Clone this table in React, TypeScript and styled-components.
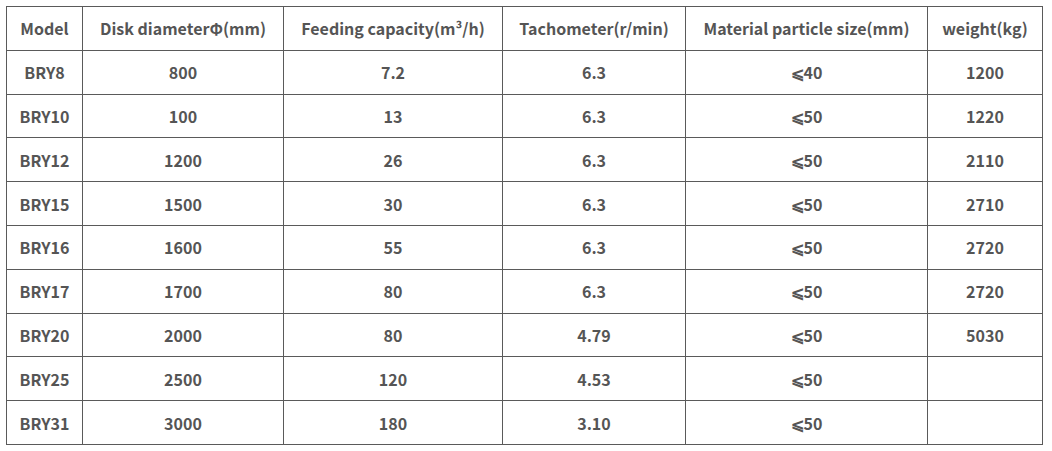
import styled, { createGlobalStyle } from "styled-components";

const GlobalStyle = createGlobalStyle`
  body {
    margin: 0;
    background: #ffffff;
  }
`;

const columns = [
  { title: "Model", width: 76 },
  { title: "Disk diameterΦ(mm)", width: 201 },
  { title: "Feeding capacity(m³/h)", width: 219 },
  { title: "Tachometer(r/min)", width: 183 },
  { title: "Material particle size(mm)", width: 242 },
  { title: "weight(kg)", width: 115 },
];

const rows = [
  ["BRY8", "800", "7.2", "6.3", "⩽40", "1200"],
  ["BRY10", "100", "13", "6.3", "⩽50", "1220"],
  ["BRY12", "1200", "26", "6.3", "⩽50", "2110"],
  ["BRY15", "1500", "30", "6.3", "⩽50", "2710"],
  ["BRY16", "1600", "55", "6.3", "⩽50", "2720"],
  ["BRY17", "1700", "80", "6.3", "⩽50", "2720"],
  ["BRY20", "2000", "80", "4.79", "⩽50", "5030"],
  ["BRY25", "2500", "120", "4.53", "⩽50", ""],
  ["BRY31", "3000", "180", "3.10", "⩽50", ""],
];

const App = () => (
  <Page>
    <GlobalStyle />
    <Table>
      <colgroup>
        {columns.map((c) => (
          <col key={c.title} style={{ width: c.width }} />
        ))}
      </colgroup>
      <thead>
        <Row>
          {columns.map((c) => (
            <HeadCell key={c.title}>{c.title}</HeadCell>
          ))}
        </Row>
      </thead>
      <tbody>
        {rows.map((r) => (
          <Row key={r[0]}>
            {r.map((v, i) => (
              <Cell key={i}>{v}</Cell>
            ))}
          </Row>
        ))}
      </tbody>
    </Table>
  </Page>
);

const Page = styled.div`
  padding: 6px 0 0 6px;
`;

const Table = styled.table`
  border-collapse: collapse;
  table-layout: fixed;
  width: 1037px;
  font-family: "Noto Sans CJK SC", "Noto Sans", sans-serif;
  font-weight: 700;
  font-size: 16px;
  color: #555555;
`;

const Row = styled.tr`
  height: 43.8px;
`;

const Cell = styled.td`
  border: 1px solid #5a5a5a;
  text-align: center;
  vertical-align: middle;
  padding: 0 6px;
  line-height: 20px;
`;

const HeadCell = styled(Cell).attrs({ as: "th" })``;

export default App;
